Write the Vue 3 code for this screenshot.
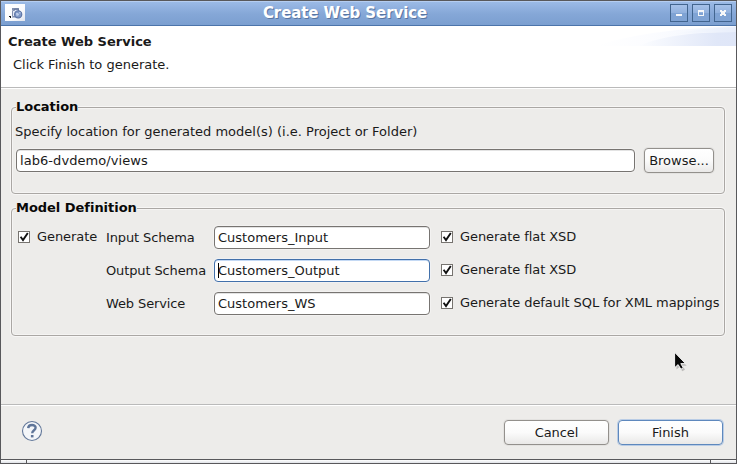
<script setup>
import { ref } from 'vue'

const location = ref('lab6-dvdemo/views')
const rows = ref([
  { label: 'Input Schema', value: 'Customers_Input', option: 'Generate flat XSD', focused: false },
  { label: 'Output Schema', value: 'Customers_Output', option: 'Generate flat XSD', focused: true },
  { label: 'Web Service', value: 'Customers_WS', option: 'Generate default SQL for XML mappings', focused: false },
])
</script>

<template>
  <div class="window">
    <header class="titlebar">
      <svg class="app-icon" width="20" height="17" viewBox="0 0 20 17">
        <defs>
          <linearGradient id="ib" x1="0" y1="0" x2="1" y2="1">
            <stop offset="0" stop-color="#fff" /><stop offset="0.6" stop-color="#fafbfd" /><stop offset="1" stop-color="#dfe4ee" />
          </linearGradient>
        </defs>
        <rect width="20" height="17" fill="url(#ib)" />
        <path d="M4 12h2v2H5v-1H4z" fill="#111" />
        <path d="M7 13.5h7" stroke="#b9c2d6" />
        <path d="M7.5 6.5v6h6v-7.5h-4v1.5z" fill="#e3e9f5" stroke="#8290b0" />
        <path d="M7 5h7" stroke="#66769c" stroke-width="1.6" />
        <circle cx="13.2" cy="10.4" r="3.6" fill="#7f98c6" stroke="#5870a2" stroke-width="1.1" />
        <path d="M11 9h2l1.2 1.5-1.2 1.3h-1.6zM14.2 8h1.2v1.4h-1.2z" fill="#bccce8" />
      </svg>
      <h1 class="title">Create Web Service</h1>
      <div class="controls">
        <button class="ctl"><svg width="16" height="16" shape-rendering="crispEdges"><path d="M5 9h6v2H5z" fill="#f5f7f9" /></svg></button>
        <button class="ctl"><svg width="16" height="16" shape-rendering="crispEdges"><path d="M5 5h6v6H5zM6 7v3h4V7z" fill="#f5f7f9" fill-rule="evenodd" /></svg></button>
        <button class="ctl"><svg width="16" height="16" shape-rendering="crispEdges"><path d="M5 5h2v1h2V5h2v2h-1v2h1v2H9v-1H7v1H5V9h1V7H5z" fill="#f5f7f9" /></svg></button>
      </div>
    </header>

    <section class="banner">
      <div class="banner-text">
        <h2>Create Web Service</h2>
        <p>Click Finish to generate.</p>
      </div>
      <svg class="swoosh" width="140" height="20" viewBox="0 0 140 20">
        <defs>
          <linearGradient id="s1"><stop offset="0" stop-color="#fff" /><stop offset="0.4" stop-color="#fbfcff" /><stop offset="1" stop-color="#f1f5fd" /></linearGradient>
          <linearGradient id="s2"><stop offset="0" stop-color="#fcfdff" /><stop offset="0.8" stop-color="#e0e7f8" /><stop offset="1" stop-color="#dfe6f8" /></linearGradient>
          <linearGradient id="s3"><stop offset="0" stop-color="#fafcff" /><stop offset="1" stop-color="#e8eefb" /></linearGradient>
        </defs>
        <path d="M0 20C38 7 90 2 140 0V20z" fill="url(#s1)" />
        <path d="M42 20C68 9 100 6 140 6V20z" fill="url(#s2)" />
        <path d="M68 10Q100 2 140 1V6Q94 6 68 10z" fill="url(#s3)" />
      </svg>
    </section>

    <main class="content">
      <section class="group location">
        <h3><span>Location</span></h3>
        <p class="hint">Specify location for generated model(s) (i.e. Project or Folder)</p>
        <div class="location-row">
          <div class="field"><span class="t-loc">{{ location }}</span></div>
          <button class="button browse">Browse...</button>
        </div>
      </section>

      <section class="group model">
        <h3><span>Model Definition</span></h3>
        <div class="grid">
          <label class="check first">
            <svg class="box" width="12" height="12"><rect x=".5" y=".5" width="11" height="11" /><path d="M2.6 5.8l2.4 3.2L9.8 2" /></svg>
            <span>Generate</span>
          </label>
          <template v-for="row in rows" :key="row.label">
            <span class="label">{{ row.label }}</span>
            <div class="field" :class="{ focused: row.focused }"><i v-if="row.focused" class="caret"></i><span>{{ row.value }}</span></div>
            <label class="check">
              <svg class="box" width="12" height="12"><rect x=".5" y=".5" width="11" height="11" /><path d="M2.6 5.8l2.4 3.2L9.8 2" /></svg>
              <span>{{ row.option }}</span>
            </label>
          </template>
        </div>
      </section>
    </main>

    <footer class="footer">
      <svg class="help" width="22" height="22" viewBox="0 0 22 22">
        <circle cx="11" cy="11" r="9.5" fill="#f4f6f9" stroke="#627799" stroke-width="1.1" />
        <path d="M7.2 8.1C7.4 3.9 14.8 4.1 14.6 7.8c0 2.4-3.4 2.5-3.4 5.4" fill="none" stroke="#5f7599" stroke-width="2.4" />
        <path d="M9.9 15h2.6v2.4H9.9z" fill="#5f7599" />
      </svg>
      <button class="button action"><span class="cancel-text">Cancel</span></button>
      <button class="button action primary">Finish</button>
    </footer>

    <div class="resize"><i></i><i></i><i></i></div>

    <svg class="pointer" width="17" height="23" viewBox="0 0 17 23">
      <path d="M3.5 4v14.5l3.3-2.7 2.4 4.4 2.8-1.4-2.3-4h4z" fill="#777" opacity=".4" />
      <path d="M1.6 1.3v15.4L5.1 13.6l2.8 4.6 2.3-1.4-2.4-4.2h4.7z" fill="#080808" stroke="#fff" stroke-width=".9" />
    </svg>
  </div>
</template>

<style>
body { margin: 0; background: #edecea; overflow: hidden; }
</style>

<style scoped>
* { box-sizing: border-box; }
h1, h2, h3, p { margin: 0; font-weight: normal; }
button { margin: 0; padding: 0; font: inherit; color: inherit; }
.window {
  position: relative;
  display: flex;
  flex-direction: column;
  width: 737px;
  height: 464px;
  border: 1px solid #58585b;
  border-bottom: 0;
  background: #edecea;
  color: #1a1a1a;
  font: 13px/16px "DejaVu Sans", sans-serif;
  white-space: nowrap;
}
.titlebar {
  display: grid;
  grid-template-columns: 82px 1fr 82px;
  height: 25px;
  border-top: 1px solid #b5cdf0;
  border-bottom: 1px solid #4c74aa;
  background: linear-gradient(#9bbae6, #85a7d7 52%, #7b9fd0);
}
.app-icon { margin: 2px 0 0 4px; display: block; }
.title {
  justify-self: center;
  margin-left: -47px;
  color: #fff;
  font-weight: bold;
  font-size: 15px;
  letter-spacing: -0.09px;
  line-height: 22px;
  text-shadow: 1px 1px 0 #5975a0;
}
.controls { display: flex; gap: 4px; padding: 2px 0 0 16px; }
.ctl {
  flex: none;
  width: 18px;
  height: 18px;
  border: 1px solid #42658f;
  background: linear-gradient(#a5c1e9, #91b1de 50%, #7fa3d4 51%, #7fa3d4);
}
.ctl svg { display: block; }
.banner {
  display: flex;
  justify-content: space-between;
  height: 63px;
  background: #fff;
  border-bottom: 1px solid #fff;
  box-shadow: inset 0 -1px #bababa;
}
.banner-text { padding: 8px 0 0 7px; }
.banner h2 { font-size: 13px; font-weight: bold; }
.banner p { margin: 7px 0 0 5px; }
.swoosh { display: block; }
.content { display: flex; flex-direction: column; gap: 14px; height: 315px; padding: 18px 11px 0 10px; }
.group { border: 1px solid #aaa7a4; border-radius: 4px; box-shadow: 0 0 0 1px #f7f6f5, inset 0 0 0 1px #f5f4f3; }
.group h3 { height: 16px; margin: -9px 0 0 4px; font-size: 13px; font-weight: bold; color: #080808; letter-spacing: -0.03px; }
.group h3 span { background: #edecea; }
.location { height: 87px; }
.model { height: 128px; }
.hint { margin: 9px 0 0 3px; }
.location-row { display: flex; align-items: center; gap: 9px; margin: 8px 0 0 4px; }
.location-row .field { width: 619px; }
.t-loc { letter-spacing: 0.06px; }
.field {
  position: relative;
  height: 23px;
  padding: 3px 0 0 3px;
  border: 1px solid #777471;
  border-radius: 4px;
  background: #fff;
  box-shadow: 0 0 0 1px #f3f2f1, inset 0 1px #e3e3e3;
}
.field.focused { border-color: #4270aa; box-shadow: 0 0 0 1px #f0f1f3, inset 0 1px #c4d9f4; }
.caret { position: absolute; left: 3px; top: 3px; width: 1px; height: 15px; background: #000; }
.button {
  border: 1px solid #93908c;
  border-radius: 4px;
  background: linear-gradient(#fff, #fbfbfb 50%, #e9e8e7);
  box-shadow: 0 0 0 1px #e3e2e0;
  text-align: center;
}
.browse { width: 70px; height: 25px; }
.grid {
  display: grid;
  grid-template-columns: 88px 108px 216px 1fr;
  grid-template-rows: repeat(3, 23px);
  row-gap: 10px;
  padding: 10px 0 0 6px;
}
.label { grid-column: 2; padding: 4px 0 0 0; letter-spacing: -0.12px; }
.check { display: flex; gap: 7px; padding: 3px 0 0 11px; letter-spacing: -0.07px; }
.check.first { grid-column: 1; grid-row: 1; padding-left: 0; }
.box { flex: none; margin-top: 2px; fill: #fff; stroke: #76736f; }
.box path { fill: none; stroke: #111; stroke-width: 1.9; }
.footer {
  display: flex;
  align-items: center;
  height: 55px;
  padding: 1px 13px 0 20px;
  border-top: 1px solid #bababa;
  box-shadow: inset 0 1px #fff;
}
.help { margin: 0 auto 3px 0; }
.action { width: 105px; height: 25px; margin-left: 9px; }
.cancel-text { letter-spacing: -0.1px; }
.primary { border-color: #5e88bd; box-shadow: 0 0 0 1px #b9cce5; }
.resize {
  display: grid;
  grid-template-columns: 25px 1fr 26px;
  height: 5px;
  border-top: 1px solid #58585b;
  border-bottom: 1px solid #58585b;
}
.resize i { background: linear-gradient(#fff, #dfe2e7); }
.resize i + i { border-left: 1px solid #58585b; }
.pointer { position: absolute; left: 672px; top: 350px; }
</style>
